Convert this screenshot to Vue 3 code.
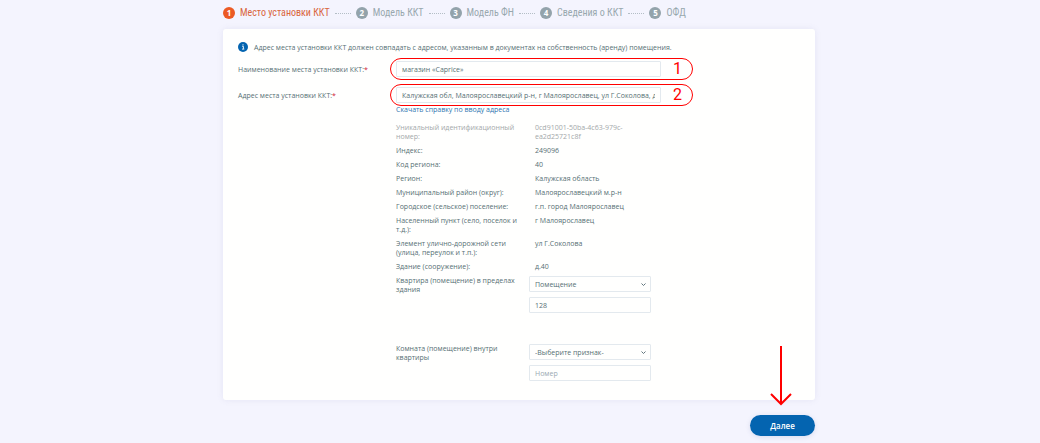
<template>
    <main class="page">
        <ol class="steps">
            <li v-for="(step, index) in steps" :key="step" class="step" :class="{ active: index === 0 }">
                <span class="step-number">{{ index + 1 }}</span>
                <span class="step-title">{{ step }}</span>
            </li>
        </ol>

        <form class="form" @submit.prevent>
            <section class="card">
                <p class="hint">
                    <svg class="hint-icon" viewBox="0 0 20 20" aria-hidden="true">
                        <circle cx="10" cy="10" r="10" fill="#0464b0" />
                        <path d="M8.2 8.6h2.6v5.2M8 14.2h4.6" fill="none" stroke="#fff" stroke-width="1.8" />
                        <circle cx="10" cy="5.6" r="1.3" fill="#fff" />
                    </svg>
                    Адрес места установки ККТ должен совпадать с адресом, указанным в документах на собственность (аренду) помещения.
                </p>

                <div class="field">
                    <label for="place-name">Наименование места установки ККТ:<span class="required">*</span></label>
                    <div class="control">
                        <input id="place-name" v-model="placeName" type="text" />
                        <span class="mark">1</span>
                    </div>
                </div>

                <div class="field">
                    <label for="place-address">Адрес места установки ККТ:<span class="required">*</span></label>
                    <div class="control">
                        <input id="place-address" v-model="placeAddress" type="text" />
                        <span class="mark">2</span>
                    </div>
                </div>

                <div class="details">
                    <a class="help-link" href="#">Скачать справку по вводу адреса</a>

                    <dl class="address">
                        <div v-for="row in addressRows" :key="row.label" class="row" :class="{ muted: row.muted }">
                            <dt>{{ row.label }}</dt>
                            <dd>{{ row.value }}</dd>
                        </div>
                    </dl>

                    <div class="row flat">
                        <label for="flat-type">Квартира (помещение) в пределах здания</label>
                        <div class="inputs">
                            <div class="select">
                                <select id="flat-type" v-model="flatType">
                                    <option>Помещение</option>
                                    <option>Квартира</option>
                                </select>
                                <svg class="chevron" viewBox="0 0 10 6" aria-hidden="true">
                                    <path d="M1 1l4 4 4-4" />
                                </svg>
                            </div>
                            <input v-model="flatNumber" type="text" aria-label="Номер помещения" />
                        </div>
                    </div>

                    <div class="row">
                        <label for="room-type">Комната (помещение) внутри квартиры</label>
                        <div class="inputs">
                            <div class="select">
                                <select id="room-type" v-model="roomType">
                                    <option>-Выберите признак-</option>
                                    <option>Комната</option>
                                </select>
                                <svg class="chevron" viewBox="0 0 10 6" aria-hidden="true">
                                    <path d="M1 1l4 4 4-4" />
                                </svg>
                            </div>
                            <input v-model="roomNumber" type="text" placeholder="Номер" aria-label="Номер комнаты" />
                        </div>
                    </div>
                </div>
            </section>

            <div class="actions">
                <button type="submit" class="next">Далее</button>
                <svg class="arrow" viewBox="0 0 22 62" aria-hidden="true">
                    <path d="M11 1v58M1 49l10 10 10-10" />
                </svg>
            </div>
        </form>
    </main>
</template>

<script setup>
import { ref } from 'vue';

const steps = ['Место установки ККТ', 'Модель ККТ', 'Модель ФН', 'Сведения о ККТ', 'ОФД'];

const placeName = ref('магазин «Caprice»');
const placeAddress = ref('Калужская обл, Малоярославецкий р-н, г Малоярославец, ул Г.Соколова, д 40');

const flatType = ref('Помещение');
const flatNumber = ref('128');
const roomType = ref('-Выберите признак-');
const roomNumber = ref('');

const addressRows = [
    { label: 'Уникальный идентификационный номер:', value: '0cd91001-50ba-4c63-979c-ea2d25721c8f', muted: true },
    { label: 'Индекс:', value: '249096' },
    { label: 'Код региона:', value: '40' },
    { label: 'Регион:', value: 'Калужская область' },
    { label: 'Муниципальный район (округ):', value: 'Малоярославецкий м.р-н' },
    { label: 'Городское (сельское) поселение:', value: 'г.п. город Малоярославец' },
    { label: 'Населенный пункт (село, поселок и т.д.):', value: 'г Малоярославец' },
    { label: 'Элемент улично-дорожной сети (улица, переулок и т.п.):', value: 'ул Г.Соколова' },
    { label: 'Здание (сооружение):', value: 'д.40' }
];
</script>

<style>
body {
    background: #f4f4fe;
}
</style>

<style scoped>
.page {
    box-sizing: border-box;
    max-width: 594px;
    margin: 0 auto;
    padding: 5px 2px 7px 0;
    color: #566f74;
    font-family: "Open Sans", "Noto Sans", sans-serif;
    font-size: 7px;
    line-height: 9px;
}

.steps {
    display: flex;
    margin: 0 0 8px;
    padding: 0;
    list-style: none;
    color: #98a8ae;
    font-family: "Roboto Condensed", "Liberation Sans Narrow", sans-serif;
    font-size: 10px;
    line-height: 16px;
}

.step {
    display: flex;
    align-items: center;
    gap: 5px;
}

.step:not(:last-child)::after {
    width: 16px;
    margin-right: 5px;
    border-top: 1px dotted #b4bec6;
    content: "";
}

.step-number {
    width: 12px;
    height: 12px;
    border-radius: 50%;
    background: #93a3ab;
    color: #fff;
    font-family: "Open Sans", sans-serif;
    font-size: 8px;
    font-weight: 700;
    line-height: 12px;
    text-align: center;
}

.active {
    color: #d9653d;
}

.active .step-number {
    background: #ec5a24;
}

.card {
    padding: 13px 15px 19px;
    border-radius: 3px;
    background: #fffffe;
    box-shadow: 0 0 6px rgba(120, 120, 170, 0.12);
}

.hint {
    display: flex;
    align-items: center;
    gap: 6px;
    margin: 0 0 9px;
}

.hint-icon {
    width: 10px;
    height: 10px;
}

.field {
    display: grid;
    grid-template-columns: 158px 1fr;
    align-items: center;
    margin-bottom: 10px;
}

.control {
    position: relative;
    width: 265px;
}

.required {
    color: #d02030;
}

input,
select {
    display: block;
    box-sizing: border-box;
    width: 100%;
    height: 16px;
    margin: 0;
    padding: 0 5px;
    border: 1px solid #e3e9ee;
    border-radius: 1px;
    outline: none;
    background: #fffffe;
    color: inherit;
    font: inherit;
}

input::placeholder {
    color: #9aa9b2;
    opacity: 1;
}

/* обводка с номером поверх поля */
.mark {
    position: absolute;
    inset: -3px -32px -3px -6px;
    box-sizing: border-box;
    padding-right: 10px;
    border: 1px solid #ff0000;
    border-radius: 11px;
    color: #ff0000;
    font-family: Roboto, sans-serif;
    font-size: 16px;
    line-height: 20px;
    text-align: right;
    pointer-events: none;
}

.details {
    width: 255px;
    margin: -8px 0 0 158px;
}

.help-link {
    display: block;
    margin-bottom: 9px;
    color: #2d74b0;
    text-decoration: none;
}

.address {
    display: grid;
    gap: 5px;
    margin: 0 0 5px;
}

.row {
    display: grid;
    grid-template-columns: 122px 122px;
    gap: 11px;
}

.address dd {
    margin: 0;
    padding-left: 6px;
}

.muted {
    color: #a3a8aa;
}

.flat {
    margin-bottom: 31px;
}

.inputs {
    display: grid;
    gap: 5px;
}

.select {
    position: relative;
}

select {
    appearance: none;
}

.chevron {
    position: absolute;
    top: 7px;
    right: 5px;
    width: 5px;
    height: 3px;
    fill: none;
    stroke: #61757d;
    stroke-width: 2;
    pointer-events: none;
}

.actions {
    position: relative;
    display: flex;
    justify-content: flex-end;
    margin-top: 15px;
}

.next {
    width: 65px;
    height: 21px;
    padding: 0;
    border: 0;
    border-radius: 11px;
    background: #0464b0;
    box-shadow: 0 1px 5px rgba(60, 80, 150, 0.15);
    color: #fff;
    font: 600 8px "Open Sans", sans-serif;
}

.arrow {
    position: absolute;
    right: 23px;
    bottom: 29px;
    width: 22px;
    height: 62px;
    fill: none;
    stroke: #ff0000;
    stroke-width: 2;
}
</style>
